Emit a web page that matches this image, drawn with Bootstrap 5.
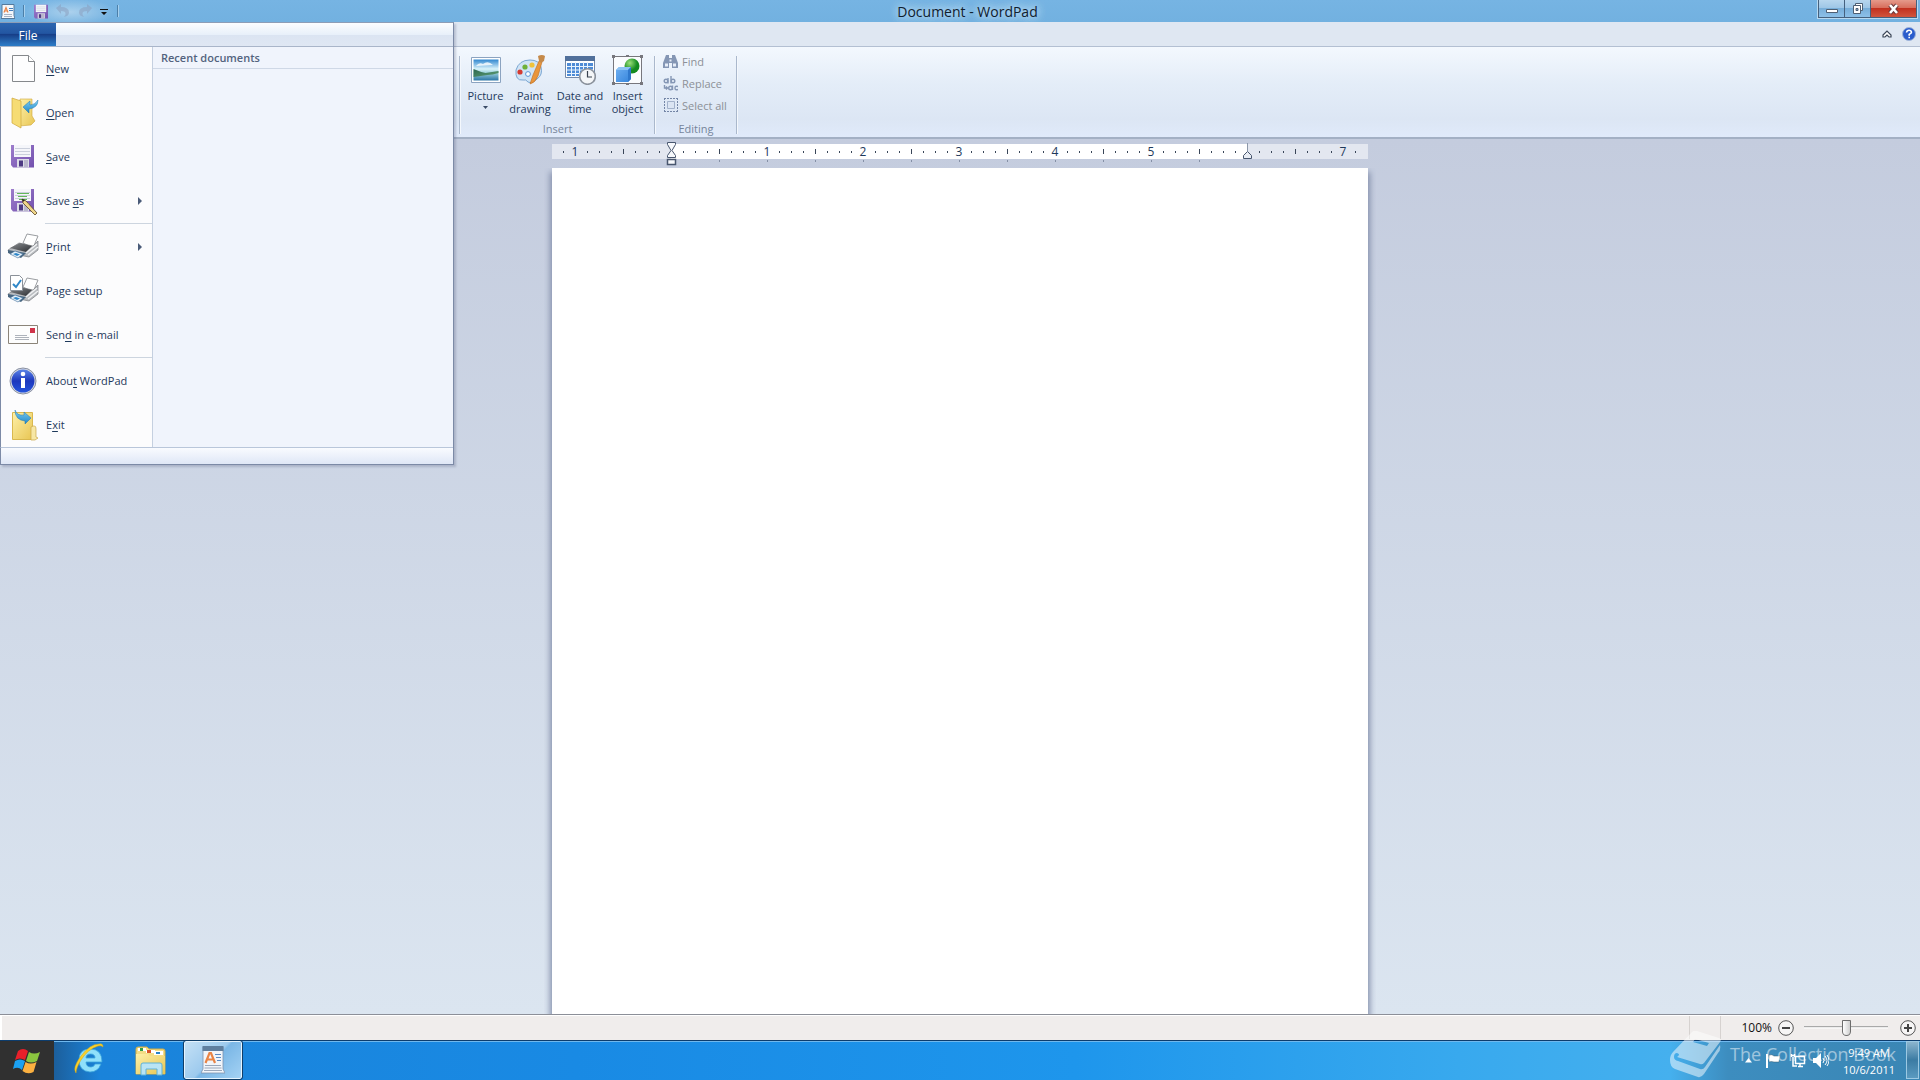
<!DOCTYPE html>
<html lang="en">
<head>
<meta charset="utf-8">
<meta name="viewport" content="width=device-width, initial-scale=1">
<title>Document - WordPad</title>
<link href="https://cdn.jsdelivr.net/npm/bootstrap@5.3.0/dist/css/bootstrap.min.css" rel="stylesheet">
<style>
  :root { --ink: #1e395b; }
  body { font-family: "Open Sans", "Noto Sans", sans-serif; font-size: 11px; line-height: 13px; color: var(--ink); background: #c5cddf; }
  button { font: inherit; color: inherit; background: none; border: 0; padding: 0; }
  svg { display: block; flex: none; }
  .titlebar { height: 22px; background: linear-gradient(#76b4e3, #72b1e0); color: #10202e; }
  .qat { padding-left: 1px; background: radial-gradient(ellipse 46px 14px at 70px 12px, rgba(255,255,255,.4), transparent); }
  .qat-sep { width: 1px; height: 12px; background: #4c7fa8; box-shadow: 1px 0 #a6d0ee; }
  .qat button:disabled { opacity: .55; }
  .title-text { font-size: 14px; line-height: 22px; padding: 1px 12px 0 12px; text-shadow: 0 0 8px #d6ecfb, 0 0 8px #d6ecfb; }
  .win-btns { height: 19px; border: 1px solid #b8d9f0; border-top: 0; margin-right: 2px; }
  .win-btns button { height: 18px; border: 1px solid #45617e; border-top: 0; background: linear-gradient(#b7d6ee 0, #9cc5e6 50%, #78aed9 50%, #8cc0e8); }
  .win-btns button + button { border-left: 0; }
  .win-btns .win-close { background: linear-gradient(#e59a8b 0, #d66a58 50%, #c2311f 50%, #d0553d); }
  .tabrow { height: 25px; background: #dfe7f2; border-bottom: 1px solid #b3bfd2; padding-right: 4px; gap: 10px; }
  .ribbon { height: 92px; padding: 5px 0 0 459px; background: linear-gradient(#f3f8fe, #e4edf8 40%, #dce6f4 80%, #e0eafa); border-bottom: 2px solid #a3b0c4; }
  .vrule { width: 2px; height: 78px; background: linear-gradient(90deg, #aab8cc 50%, #f4f8fd 50%); }
  .group-name { color: #76859b; line-height: 15px; }
  .insert-tools { padding: 2px 7px 0 2px; height: 69px; }
  .big-tool { height: 64px; line-height: 13px; }
  .big-tool svg { margin: 0 auto 6px; }
  .small-tool { height: 22px; color: #8c9097; padding: 0 0 4px 7px; }
  .small-tools { height: 69px; }
  .workspace { background: linear-gradient(#c4ccde, #dbe5f0); }
  .sheet-width { width: 816px; }
  .ruler { margin-top: 5px; height: 15px; padding-left: 5px; background: linear-gradient(90deg, #e3e7f0 119px, #fff 119px, #fff 695px, #e3e7f0 695px); }
  .tick-cell { width: 12px; height: 15px; font-size: 12px; line-height: 15px; }
  .dot { width: 1px; height: 2px; background: #3a4658; }
  .half { width: 1px; height: 5px; background: #3a4658; }
  .stop-row { height: 9px; padding-left: 144px; }
  .stop-row i { width: 48px; }
  .stop-row i::before { content: ""; display: block; width: 1px; height: 2px; margin: 1px 0 0 23px; background: #8590a6; }
  .indent-mark { position: absolute; top: -2px; }
  .sheet { background: #fff; border: 0; border-radius: 0; resize: none; outline: 0; padding: 96px 119px; box-shadow: 0 6px 6px 2px #8590ac; clip-path: inset(0 -8px 0 -8px); font-size: 14px; line-height: 18px; }
  .statusbar { height: 26px; border-top: 1px solid #8c8f98; background: #f0edec; color: #111; font-size: 12px; box-shadow: inset 0 1px #fff, inset 2px 0 #fff; }
  .status-cell { height: 23px; width: 32px; border: solid #d6d2d0; border-width: 0 1px; }
  .zoom-range { appearance: none; -webkit-appearance: none; width: 84px; height: 18px; background: linear-gradient(#f0edec 7px, #a9a9a9 7px, #a9a9a9 8px, #d9d9d9 8px, #fff 9px, #f0edec 10px); margin: 0; }
  .zoom-range::-webkit-slider-thumb { -webkit-appearance: none; width: 9px; height: 16px; border: 1px solid #6d6d6d; border-radius: 1px 1px 5px 5px; background: linear-gradient(90deg, #fff, #cfcfcf); }
  .taskbar { height: 40px; border-top: 1px solid #0d3d6d; box-shadow: inset 0 1px #6fb8ee; color: #fff;
    background: linear-gradient(90deg, #1c5f9c 54px, #1a83da 100px, #198ae4 30%, #1e96ec 56%, #38a9ee 76%, #45b0ee 87%, #3d8dbf 90%, #3a86b4); }
  .start-btn { width: 54px; background: #303030; }
  .task-btn { width: 58px; height: 38px; border: 1px solid #e5f4ff; outline: 1px solid #0f3d68; border-radius: 2px; background: linear-gradient(135deg, #c4e0f5 0, #9dcaee 48%, #7bb7e6 52%, #a4d2f4); }
  .peek-btn { width: 13px; height: 38px; margin: 0 1px 0 0; border: 1px solid #9cc9e3; background: linear-gradient(#8bb5ce, #3b7ba3 50%, #5a9ac0); }
  .clock { line-height: 17px; width: 74px; padding-top: 3px; }
  .watermark { position: absolute; right: 24px; bottom: 1px; opacity: .5; color: #fff; pointer-events: none; gap: 8px; }
  .watermark span { font-size: 18px; line-height: 24px; padding-bottom: 2px; }
  .file-menu { position: absolute; top: 22px; left: 0; width: 454px; border-top: 1px solid #8d9db6; border-right: 1px solid #7c8aa6; box-shadow: 2px 2px 2px rgba(70,80,110,.25); }
  .file-head { height: 24px; background: linear-gradient(#fbfdff, #e8f0fa 50%, #dbe4f2 52%, #dfe7f3); border-bottom: 1px solid #a9b5c9; }
  .file-tab { width: 56px; height: 23px; padding-top: 1px; color: #fff; font-size: 12px; background: linear-gradient(#2c66b0, #2356a2 45%, #173f88 50%, #2a72bd 90%, #2c7cc6); }
  .file-body { border-left: 1px solid #7c8aa6; border-bottom: 1px solid #b9c6da; }
  .file-list { width: 152px; background: #fcfcfd; border-right: 1px solid #c5d0e0; }
  .file-item { height: 44px; padding: 0 9px 0 6px; gap: 7px; text-align: left; width: 100%; }
  .file-item span { padding-bottom: 2px; }
  .file-item u { text-underline-offset: 2px; }
  .file-sep { height: 2px; margin-left: 44px; border-top: 1px solid #cdd5df; }
  .recent { background: #f0f4fc; }
  .recent h2 { font-size: 11px; font-weight: 600; line-height: 21px; height: 22px; margin: 0; padding-left: 8px; color: #53637e; border-bottom: 1px solid #cfd8e6; }
  .file-foot { height: 17px; border: solid #7c8aa6; border-width: 0 0 1px 1px; background: linear-gradient(#f9fbff, #dfe7f6); }
</style>
<script src="https://cdn.jsdelivr.net/npm/bootstrap@5.3.0/dist/js/bootstrap.bundle.min.js"></script>
</head>
<body>
<svg width="0" height="0" class="position-absolute" aria-hidden="true">
  <defs>
    <linearGradient id="gFold" x2="1" y2="1"><stop stop-color="#fdf0a8"/><stop offset="1" stop-color="#e8c552"/></linearGradient>
    <linearGradient id="gPurple" x2="1" y2="1"><stop stop-color="#9d7dcc"/><stop offset="1" stop-color="#7351ae"/></linearGradient>
    <linearGradient id="gSky" x2="0" y2="1"><stop stop-color="#2f86cf"/><stop offset=".45" stop-color="#d9f3fb"/><stop offset=".62" stop-color="#9fd3dc"/><stop offset="1" stop-color="#2a75a6"/></linearGradient>
    <linearGradient id="gLand" x2="1" y2="1"><stop stop-color="#2c6650"/><stop offset="1" stop-color="#5f9f74"/></linearGradient>
    <linearGradient id="gInfo" x2="0" y2="1"><stop stop-color="#5b83e6"/><stop offset=".5" stop-color="#1c37bd"/><stop offset="1" stop-color="#2454dc"/></linearGradient>
    <linearGradient id="gBlue" x2="0" y2="1"><stop stop-color="#7ed0f2"/><stop offset="1" stop-color="#1f86c8"/></linearGradient>
    <linearGradient id="gGrey" x2="1" y2="1"><stop stop-color="#8b8e92"/><stop offset="1" stop-color="#2d2f33"/></linearGradient>
    <linearGradient id="gCube" x2="1" y2="1"><stop stop-color="#6fb0f2"/><stop offset="1" stop-color="#3484dc"/></linearGradient>
    <radialGradient id="gGreen" cx=".35" cy=".3"><stop stop-color="#9be07a"/><stop offset="1" stop-color="#128a20"/></radialGradient>
    <symbol id="floppy" viewBox="0 0 23 24">
      <path d="M0 1h23v22.500H2L0 21z" fill="url(#gPurple)"/>
      <path d="M3 1h17v12H3z" fill="#f5f6fa"/><path d="M4 4.500h15M4 7.500h15M4 10.500h15" stroke="#cbd0dc"/>
      <path d="M6 15h12v8.500H6z" fill="#dcdce6"/><path d="M8 16.500h4v6H8z" fill="#4d3a83"/><path d="M13 16h4v7h-4z" fill="#b9b6cc"/>
    </symbol>
    <symbol id="printer" viewBox="0 0 32 26">
      <path d="M16 10L20 1l11 2-5 12z" fill="#fff" stroke="#9a9da1"/>
      <path d="M1 17l11-7 14 3 5-5v9l-9 7-20-4z" fill="#b9bcc0" stroke="#7c7f84" stroke-width=".7"/>
      <path d="M3 15l10-5 12 3-6 6z" fill="url(#gGrey)"/>
      <path d="M19 20l11-9M21 22l10-8" stroke="#f1f2f3" stroke-width="1.500"/>
      <path d="M1 17l18 3-5 5-13-5z" fill="#47657f"/>
      <path d="M3 21l5-3 8 3-5 4z" fill="#e8f2fa" stroke="#3c6b99" stroke-width=".6"/><path d="M6 21l3-1 4 1.500-3 1.500z" fill="#2e86c9"/>
    </symbol>
    <symbol id="notepad" viewBox="0 0 24 28">
      <path d="M2 1h20v22l2 4H0l2-4z" fill="#f1f5fa" stroke="#7d93ad" stroke-width=".8"/>
      <path d="M1.500 0h21v5h-21z" fill="#5f7f9f"/>
      <path d="M4.500 17L8.500 7h1.500L14 17M6.500 13.500h6" fill="none" stroke="#e98445" stroke-width="2.200"/>
      <path d="M14 8.500h6M15 11.500h5M16 14.500h4" stroke="#5c8cc4" stroke-width="1.200"/><path d="M4 19.500h16M3.500 22h17M3 24.500h18" stroke="#9aa7ba"/>
    </symbol>
  </defs>
</svg>

<div class="d-flex flex-column min-vh-100 position-relative">
  <header class="titlebar d-flex">
    <div class="qat d-flex align-items-center">
      <svg width="14" height="15" viewBox="0 0 14 15"><path d="M1 .5h12v11l1 3H0l1-3z" fill="#f3f7fb" stroke="#557a9c"/><path d="M3 8.500L5 3.500l2 5M3.500 7H6" fill="none" stroke="#e98445" stroke-width="1.200"/><path d="M8 4.500h4M8 6.500h4" stroke="#4680bd"/><path d="M3 10.500h8M3 12.500h8" stroke="#a7b4c5"/></svg>
      <span class="qat-sep ms-2"></span>
      <button style="margin-left:10px" aria-label="Save"><svg width="14" height="15"><use href="#floppy"/></svg></button>
      <button class="ms-2" aria-label="Undo" disabled><svg width="14" height="14" viewBox="0 0 14 14"><path d="M0 4l5-4v3q8 0 8 5.500Q13 12 8 13q2-2 1.500-4T5 7v3z" fill="#8ba0c0"/></svg></button>
      <button class="ms-2" aria-label="Redo" disabled><svg width="14" height="14" viewBox="0 0 14 14"><path d="M14 4L9 0v3Q1 3 1 8.500 1 12 6 13 4 11 4.500 9T9 7v3z" fill="#8ba0c0"/></svg></button>
      <button class="ms-2" aria-label="Customize Quick Access Toolbar"><svg width="8" height="10" viewBox="0 0 8 10"><path d="M0 3h8v1H0zM1 6h6L4 9z" fill="#111"/></svg></button>
      <span class="qat-sep" style="margin-left:9px"></span>
    </div>
    <div class="title-text flex-grow-1 text-center">Document - WordPad</div>
    <div class="win-btns d-flex">
      <button aria-label="Minimize" style="width:27px"><svg class="mx-auto" width="14" height="12"><path d="M1.500 6.500h11v3h-11z" fill="#fff" stroke="#4e5f73"/></svg></button>
      <button aria-label="Restore Down" style="width:26px"><svg class="mx-auto" width="14" height="13"><path d="M4.500 1.500h7v7h-7z" fill="#fff" stroke="#4e5f73"/><path d="M2.500 3.500h7v8h-7z" fill="#fff" stroke="#4e5f73"/><path d="M5 6.500h2v2H5z" fill="#8cb7da" stroke="#4e5f73"/></svg></button>
      <button class="win-close" aria-label="Close" style="width:46px"><svg class="mx-auto" width="14" height="12"><path d="M3 2l7 8M10 2L3 10" stroke="#6b3a3c" stroke-width="4.500"/><path d="M3 2l7 8M10 2L3 10" stroke="#fff" stroke-width="2.600"/></svg></button>
    </div>
  </header>

  <nav class="tabrow d-flex justify-content-end align-items-center" aria-label="Ribbon">
    <button aria-label="Minimize the Ribbon"><svg width="10" height="8" viewBox="0 0 10 8"><path d="M1 5l4-4 4 4v2H7L5 5 3 7H1z" fill="#fff" stroke="#3b4657" stroke-width="1.200"/></svg></button>
    <button aria-label="Help"><svg width="14" height="14" viewBox="0 0 14 14"><circle cx="7" cy="7" r="6.500" fill="#2a5ccc" stroke="#9fb4da"/><path d="M4.500 5.500Q4.800 3.200 7 3.200T9.500 5.300Q9.500 6.300 7.200 7.400V8.800M7.200 9.800v1.500" fill="none" stroke="#fff" stroke-width="1.600"/></svg></button>
  </nav>

  <section class="ribbon d-flex">
    <span class="vrule mt-1"></span>
    <div class="text-center">
      <div class="insert-tools d-flex">
        <button class="big-tool" style="width:45px"><svg width="30" height="26" viewBox="0 0 30 26"><path d="M.5.500h29v25H.5z" fill="#fff" stroke="#8ba3c0"/><path d="M2.500 2.500h25v21h-25z" fill="url(#gSky)"/><path d="M2.500 12q7 3 12 4l13-2v2q-6 2-11 2l-14 2z" fill="url(#gLand)"/><path d="M5 9q3-4 7-2 5-4 10 1z" fill="#fff" opacity=".8"/></svg>Picture<br><svg width="7" height="4" style="margin-top:4px"><path d="M1 0h5L3.500 3z" fill="#3a4b66"/></svg></button>
        <button class="big-tool" style="width:44px"><svg width="32" height="30" viewBox="0 0 32 30" style="margin-top:-2px;margin-bottom:4px"><path d="M2 15Q5 5 16 5q9 0 11 7 2 8-4 12-5 5-9 3-2-3-5-2-8 1-7-10z" fill="#cfe4f6" stroke="#7aa6d2"/><circle cx="6" cy="17" r="2.600" fill="#d43b32"/><circle cx="11" cy="12" r="2.600" fill="#6fb13a"/><circle cx="18" cy="10" r="2.600" fill="#f0c23a"/><circle cx="14" cy="19" r="2.400" fill="#fff" stroke="#5a94d6"/><path d="M16 29l3-9 6-14 3 1-4 14q-3 7-8 8z" fill="#e9963c" stroke="#bd6d20" stroke-width=".6"/><path d="M24 1q4-2 7 0l-1 5-3 2-2-2z" fill="#c58a4a"/></svg>Paint<br>drawing</button>
        <button class="big-tool" style="width:56px"><svg width="32" height="30" viewBox="0 0 32 30" style="margin-top:-2px;margin-bottom:4px"><path d="M1.500 1.500h29v21h-29z" fill="#fff" stroke="#7389a8"/><path d="M1 1h30v5H1z" fill="#51709b"/><path d="M3 8h26v13H3z" fill="#4d8bd6"/><path d="M3 11.500h26M3 15h26M3 18.500h26M7.500 7v15M11.500 7v15M15.500 7v15M19.500 7v15M23.500 7v15" stroke="#e8f3fd"/><circle cx="23.500" cy="21.500" r="7.800" fill="#f4f6f8" stroke="#8b929c" stroke-width="1.600"/><path d="M23.500 16v6h4.500" fill="none" stroke="#39424f" stroke-width="1.200"/></svg>Date and<br>time</button>
        <button class="big-tool" style="width:39px"><svg width="31" height="30" viewBox="0 0 31 30" style="margin-top:-2px;margin-bottom:4px"><path d="M1.500 1.500h28v27h-28z" fill="#fafcfe" stroke="#77777d"/><circle cx="20" cy="11" r="7.500" fill="url(#gGreen)"/><path d="M4 15l3-3h12v12l-3 3H4z" fill="url(#gCube)"/><path d="M4 15l3-3h12l-3 3z" fill="#8cc2f3"/><path d="M16 15l3-3v12l-3 3z" fill="#2f78cc"/><path d="M0 0h3v3H0zM28 0h3v3h-3zM0 27h3v3H0zM28 27h3v3h-3zM14 0h3v2h-3zM14 28h3v2h-3z" fill="#77777d"/></svg>Insert<br>object</button>
      </div>
      <div class="group-name">Insert</div>
    </div>
    <span class="vrule mt-1"></span>
    <div style="width:80px">
      <div class="small-tools">
        <button class="small-tool d-flex align-items-center gap-1" disabled><svg width="15" height="13" viewBox="0 0 15 13"><path d="M3 0h3v3h3V0h3l3 8v5H9V8H6v5H0V8z" fill="#8496b4"/><path d="M2 8.500h3v3H2zM10 8.500h3v3h-3zM6.500 4.500h2v2h-2z" fill="#e7eef8"/></svg>Find</button>
        <button class="small-tool d-flex align-items-center gap-1" disabled><svg width="15" height="15" viewBox="0 0 15 15" fill="none" stroke="#8496b4" stroke-width="1.400"><circle cx="3" cy="5" r="1.800"/><path d="M5 2v5.500M8 0v7.500"/><circle cx="10" cy="5" r="1.800"/><circle cx="7.500" cy="12" r="1.800"/><path d="M9.500 9.500V14M15 10.500q-3-1-3 1.500t3 1.500M1.500 9v3H4M3 10.500L4.500 12 3 13.500"/></svg>Replace</button>
        <button class="small-tool d-flex align-items-center gap-1" disabled><svg width="15" height="14" viewBox="0 0 15 14"><path d="M1 .5h14M1 13.500h14M1.500 0v14M14.500 0v14" fill="none" stroke="#7486a6" stroke-dasharray="2 1"/><path d="M4.500 3.500h7v7h-7z" fill="#dbe5f3" stroke="#a3b2cb"/></svg>Select all</button>
      </div>
      <div class="group-name text-center">Editing</div>
    </div>
    <span class="vrule mt-1"></span>
  </section>

  <main class="workspace flex-grow-1 d-flex flex-column">
    <div class="sheet-width mx-auto position-relative">
      <div class="ruler d-flex position-relative" id="ruler">
        <svg class="indent-mark" style="left:114px" width="11" height="24" viewBox="0 0 11 24"><path d="M1.500.500h8v2L6 8.500l3.500 5v2h-8v-2L5 8.500l-3.500-6z" fill="#f7f9fc" stroke="#48566e"/><path d="M1.500 17.500h8v5h-8z" fill="#f7f9fc" stroke="#48566e" stroke-width="1.500"/></svg>
        <svg class="indent-mark" style="left:690px" width="11" height="17" viewBox="0 0 11 17"><path d="M5.500 1v8" stroke="#8d98aa"/><path d="M1.500 16.500v-3l4-4 4 4v3z" fill="#e9edf4" stroke="#48566e"/></svg>
      </div>
      <div class="stop-row d-flex"><i></i><i></i><i></i><i></i><i></i><i></i><i></i><i></i><i></i><i></i><i></i></div>
    </div>
    <textarea class="sheet sheet-width mx-auto flex-grow-1" aria-label="Document"></textarea>
  </main>

  <footer class="statusbar d-flex align-items-center justify-content-end">
    <span class="status-cell"></span>
    <label for="zoom" style="padding:0 6px 0 20px">100%</label>
    <button aria-label="Zoom out"><svg width="16" height="16" viewBox="0 0 16 16"><circle cx="8" cy="8" r="7.300" fill="#f6f5f5" stroke="#555"/><path d="M4 8h8" stroke="#444" stroke-width="2"/></svg></button>
    <input id="zoom" class="zoom-range" type="range" min="0" max="200" value="100" style="margin:0 12px 0 10px">
    <button class="me-1" aria-label="Zoom in"><svg width="16" height="16" viewBox="0 0 16 16"><circle cx="8" cy="8" r="7.300" fill="#f6f5f5" stroke="#555"/><path d="M4 8h8M8 4v8" stroke="#444" stroke-width="2"/></svg></button>
  </footer>

  <footer class="taskbar d-flex">
    <button class="start-btn" aria-label="Start"><svg class="mx-auto" width="28" height="26" viewBox="0 0 28 26"><path d="M5 3q5-4 10 0l-3 9Q7 9 2 12z" fill="#e8202a"/><path d="M16 4q5 3 11 0l-3 9q-6 3-11 0z" fill="#8bc53f"/><path d="M2 13q5-3 10 0l-3 9q-4-4-9-1z" fill="#1ba1f2"/><path d="M12.500 14q5 3 11 0l-3 10q-6 3-11-1z" fill="#fbb040"/></svg></button>
    <button style="width:70px;padding:0 0 3px 20px" aria-label="Internet Explorer"><svg width="31" height="32" viewBox="0 0 31 32"><path d="M27 21q-3 8-11 8Q5 28 5 17T16 6q12 0 12 13H12q0 5 5 5 3 0 4-3zM12 15h9q0-4-4.500-4T12 15z" fill="#8fe0fb" stroke="#3aa4dc" stroke-width=".8"/><path d="M2 30Q-2 25 7 13T25 1q4-1 4 3-2-2-5-1Q14 6 7 17 2 25 2 30z" fill="#f8d12c" stroke="#d8a713" stroke-width=".5"/></svg></button>
    <button style="width:60px;padding-left:11px" aria-label="File Explorer"><svg width="32" height="31" viewBox="0 0 32 31"><path d="M1 4q0-2 2-2h9l2 2h14q2 0 2 2v23H1z" fill="#f3dd86" stroke="#d1ad45"/><path d="M3 3h8v3H3zM11 5h9v3h-9zM19 6h9v4h-9z" fill="#fff"/><path d="M5 3h3v3H5z" fill="#2e9e47"/><path d="M12 5h4v3h-4z" fill="#d85427"/><path d="M21 7h4v2h-4z" fill="#2a83c8"/><path d="M1 9h12l2 2h15v18H1z" fill="url(#gFold)"/><path d="M6 30V20q0-2 2-2h17q2 0 2 2v10h-5v-6H11v6z" fill="#b9e4f5" stroke="#5fb2d8"/></svg></button>
    <button class="task-btn" aria-label="Document - WordPad"><svg class="mx-auto" width="24" height="28"><use href="#notepad"/></svg></button>
    <div class="ms-auto d-flex align-items-center">
      <button aria-label="Show hidden icons"><svg width="7" height="5"><path d="M0 4.500L3.500 0 7 4.500z" fill="#fff"/></svg></button>
      <button aria-label="Action Center" style="margin-left:14px"><svg width="14" height="16" viewBox="0 0 14 16"><path d="M0 1h2v14H0z" fill="#fff"/><path d="M3 2q3-1 5 1h6l-1 6H8Q5 8 3 9z" fill="#fff" stroke="#35586e" stroke-width=".5"/></svg></button>
      <button style="margin-left:10px" aria-label="Network"><svg width="16" height="15" viewBox="0 0 16 15"><path d="M5.500 3.500h9v7h-9zM8 13.500h5M10 11v2M1 2.500h4M1.500 1v3M4.500 1v3M3 4v9h4" fill="none" stroke="#fff" stroke-width="1.500"/></svg></button>
      <button style="margin-left:7px" aria-label="Volume"><svg width="16" height="15" viewBox="0 0 16 15"><path d="M0 5h3l5-5v15l-5-5H0z" fill="#fff"/><path d="M10 5q2 2.500 0 5M12 3q4 4.500 0 9M14 2q4 5.500 0 11" fill="none" stroke="#fff"/></svg></button>
    </div>
    <div class="clock text-center" style="margin-left:3px">9:49 AM<br>10/6/2011</div>
    <button class="peek-btn" aria-label="Show desktop"></button>
  </footer>

  <div class="watermark d-flex align-items-center">
    <svg width="52" height="48" viewBox="0 0 52 48"><path fill-rule="evenodd" d="M22 1q2-2 5-1l22 7q3 1 1 4L34 32q-2 2-4 1L7 26q4-3 0-4-3 0-3 4 0 3 4 4l22 8q3 1 5-2L50 14q1 5-2 8L34 43q-3 4-6 3L5 38q-5-2-5-9 0-5 3-8zM25 8l14 4-2 3-14-4z" fill="#fff"/></svg>
    <span>The Collection Book</span>
  </div>

  <div class="file-menu">
    <div class="file-head"><button class="file-tab">File</button></div>
    <div class="file-body d-flex">
      <div class="file-list">
        <button class="file-item d-flex align-items-center"><svg width="32" height="32"><path d="M5.500 2.500h16l6 6v20h-22z" fill="#fdfdfe" stroke="#85888c"/><path d="M21.500 2.500v6h6" fill="#fff" stroke="#85888c"/></svg><span><u>N</u>ew</span></button>
        <button class="file-item d-flex align-items-center"><svg width="32" height="32"><path d="M13 2h12v17l3 5-4 4-12 1z" fill="url(#gFold)" stroke="#cfa63a" stroke-width=".6"/><path d="M5 1l9 3v27l-9-5z" fill="#f6dc74" stroke="#cfa63a" stroke-width=".7"/><path d="M31 3q0 8-9 9v4l-6-6 7-6v4q5 0 8-5z" fill="url(#gBlue)" stroke="#1c76b0" stroke-width=".5"/></svg><span><u>O</u>pen</span></button>
        <button class="file-item d-flex align-items-center"><svg width="32" height="32"><use href="#floppy" x="4" y="3" width="23" height="24"/></svg><span><u>S</u>ave</span></button>
        <button class="file-item d-flex align-items-center"><svg width="32" height="32"><use href="#floppy" x="4" y="3" width="23" height="24"/><path d="M10 8.500h12M11 11.500h9M12 14.500h8" stroke="#63b85b"/><path d="M15 14l4 2 11 12-2 2-12-12z" fill="#f0d68a" stroke="#5b4523" stroke-width=".8"/><path d="M15 14l3 1-2 2z" fill="#222"/></svg><span>Save <u>a</u>s</span><svg class="ms-auto" width="6" height="8"><path d="M1 0l4 4-4 4z" fill="#4a5b78"/></svg></button>
        <div class="file-sep"></div>
        <button class="file-item d-flex align-items-center"><svg width="32" height="32"><use href="#printer" y="2" width="32" height="26"/></svg><span><u>P</u>rint</span><svg class="ms-auto" width="6" height="8"><path d="M1 0l4 4-4 4z" fill="#4a5b78"/></svg></button>
        <button class="file-item d-flex align-items-center"><svg width="32" height="32"><use href="#printer" y="2" width="32" height="26"/><path d="M3.500.500h9l3 3v12h-12z" fill="#fff" stroke="#8b9199"/><path d="M6 9l3 3 5-7" fill="none" stroke="#2f87c8" stroke-width="2"/></svg><span>Pa<u>g</u>e setup</span></button>
        <button class="file-item d-flex align-items-center"><svg width="32" height="32"><path d="M1.500 6.500h29v18h-29z" fill="#fdfdfd" stroke="#8b8479"/><path d="M23 9h5v5h-5z" fill="#d0344a"/><path d="M8 16.500h12M8 18.500h14M8 20.500h14" stroke="#aeb3bb"/></svg><span>Sen<u>d</u> in e-mail</span></button>
        <div class="file-sep"></div>
        <button class="file-item d-flex align-items-center"><svg width="32" height="32"><circle cx="16" cy="16" r="13" fill="#d8dbe2" stroke="#8890a4"/><circle cx="16" cy="16" r="11.500" fill="url(#gInfo)"/><circle cx="16" cy="9" r="2.300" fill="#fff"/><path d="M14 13h4v10h-4z" fill="#fff"/></svg><span>Abou<u>t</u> WordPad</span></button>
        <button class="file-item d-flex align-items-center"><svg width="32" height="32"><path d="M5.500 3.500h20v27h-20z" fill="url(#gFold)" stroke="#d9b84e"/><path d="M24 18q5-3 5 2v8l2 1-3 2h-4z" fill="#f7e7a4" stroke="#c8a648" stroke-width=".7"/><path d="M8 1q2 6 9 5V3l7 6-6 6v-3Q8 11 8 1z" fill="url(#gBlue)" stroke="#1c76b0" stroke-width=".5"/></svg><span>E<u>x</u>it</span></button>
      </div>
      <div class="recent flex-grow-1"><h2>Recent documents</h2></div>
    </div>
    <div class="file-foot"></div>
  </div>
</div>

<script>
  // Twelve-pixel cells, eight to the inch: numbers on inches, bars on halves, dots between.
  const ruler = document.getElementById('ruler');
  for (let i = 0; i < 67; i++) {
    const step = i - 9;
    const cell = document.createElement('span');
    cell.className = 'tick-cell d-flex align-items-center justify-content-center';
    if (step % 8 === 0) {
      const inch = Math.abs(step / 8);
      if (inch !== 0 && inch !== 6) cell.textContent = inch;
    } else {
      const mark = document.createElement('i');
      mark.className = step % 4 === 0 ? 'half' : 'dot';
      cell.append(mark);
    }
    ruler.append(cell);
  }
</script>
</body>
</html>
